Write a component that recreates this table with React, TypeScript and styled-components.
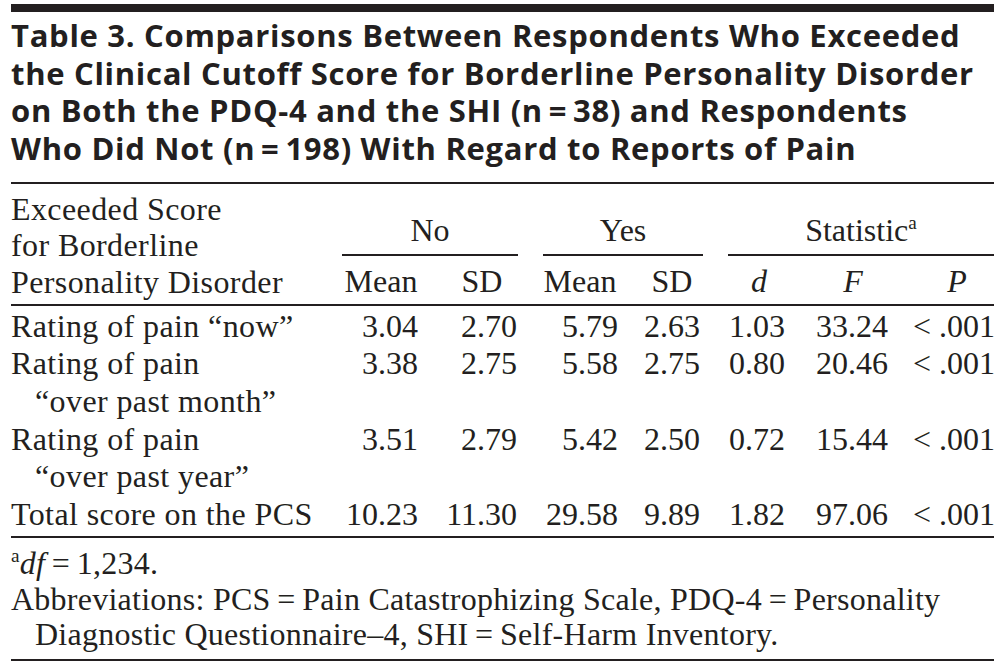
import React from "react";
import styled, { createGlobalStyle } from "styled-components";

const INK = "#231f20";
const COLS = "326px 81px 99px 101px 82px 85px 103px 106px";

const GlobalStyle = createGlobalStyle`
  html, body { margin: 0; padding: 0; background: #ffffff; }
  body { width: 1004px; height: 666px; overflow: hidden; }
`;

const Page = styled.div`
  box-sizing: border-box;
  width: 1004px;
  padding: 4px 10px 0 11px;
  color: ${INK};
`;

const Rule = styled.div<{ $h: number; $mt?: number }>`
  height: ${(p) => p.$h}px;
  margin-top: ${(p) => p.$mt ?? 0}px;
  background: ${INK};
`;

const Title = styled.h1`
  margin: 5px 0 0;
  font-family: "Open Sans", "Noto Sans", sans-serif;
  font-weight: 700;
  font-size: 31px;
  line-height: 37.7px;
  letter-spacing: 0.7px;
`;

const TitleLine = styled.span`
  display: block;
  white-space: nowrap;
`;

const Serif = styled.div`
  font-family: "Liberation Serif", "Times New Roman", serif;
  font-size: 32px;
`;

const HeadGrid = styled.div`
  display: grid;
  grid-template-columns: ${COLS};
  grid-template-rows: 77px 43px;
  border-bottom: 2px solid ${INK};
`;

const StubHead = styled.div`
  grid-column: 1;
  grid-row: 1 / span 2;
  align-self: end;
  padding-bottom: 3.5px;
  line-height: 36.5px;
  letter-spacing: 0.4px;
  white-space: nowrap;
`;

const Spanner = styled.div<{ $col: string; $ml: number; $mr: number }>`
  grid-row: 1;
  grid-column: ${(p) => p.$col};
  align-self: end;
  display: flex;
  flex-direction: column;
  margin: 0 ${(p) => p.$mr}px 5px ${(p) => p.$ml}px;
  text-align: center;
  line-height: 37.5px;
  white-space: nowrap;
`;

const SpannerRule = styled.div`
  height: 2px;
  margin-top: 4px;
  background: ${INK};
`;

const ColHead = styled.div<{ $pl: number; $italic?: boolean }>`
  grid-row: 2;
  align-self: end;
  padding: 0 0 3.5px ${(p) => p.$pl}px;
  text-align: center;
  line-height: 37.5px;
  font-style: ${(p) => (p.$italic ? "italic" : "normal")};
`;

const Body = styled.div`
  padding: 2px 0 2.4px;
  border-bottom: 2px solid ${INK};
`;

const Row = styled.div`
  display: grid;
  grid-template-columns: ${COLS};
  line-height: 37.6px;
`;

const Stub = styled.div`
  padding-left: 24px;
  text-indent: -24px;
  letter-spacing: 0.4px;
  white-space: nowrap;
`;

const Num = styled.div<{ $pl: number }>`
  padding-left: ${(p) => p.$pl}px;
  text-align: right;
  white-space: nowrap;
`;

const Sup = styled.span`
  font-size: 0.6em;
  vertical-align: 0.6em;
  line-height: 0;
`;

const Foot = styled.div`
  font-family: "Liberation Serif", "Times New Roman", serif;
  font-size: 32px;
  line-height: 35.5px;
  letter-spacing: 0.25px;
  padding-top: 8.5px;
`;

const FootLine = styled.div`
  padding-left: 24px;
  text-indent: -24px;
  white-space: nowrap;
`;

const I = styled.i`
  font-style: italic;
`;

const DATA_PADS = [25, 28, 26, 29, 30, 25];
const HEAD_PADS = [7, 29, 25, 26, 33, 33, 32];

type DataRow = { label: React.ReactNode; values: string[] };

const rows: DataRow[] = [
  { label: <>Rating of pain “now”</>, values: ["3.04", "2.70", "5.79", "2.63", "1.03", "33.24", "< .001"] },
  { label: <>Rating of pain<br />“over past month”</>, values: ["3.38", "2.75", "5.58", "2.75", "0.80", "20.46", "< .001"] },
  { label: <>Rating of pain<br />“over past year”</>, values: ["3.51", "2.79", "5.42", "2.50", "0.72", "15.44", "< .001"] },
  { label: <>Total score on the PCS</>, values: ["10.23", "11.30", "29.58", "9.89", "1.82", "97.06", "< .001"] },
];

const colHeads: { text: string; italic?: boolean }[] = [
  { text: "Mean" },
  { text: "SD" },
  { text: "Mean" },
  { text: "SD" },
  { text: "d", italic: true },
  { text: "F", italic: true },
  { text: "P", italic: true },
];

export default function App() {
  return (
    <>
      <GlobalStyle />
      <Page>
        <Rule $h={8} />
        <Title>
          <TitleLine>Table 3. Comparisons Between Respondents Who Exceeded</TitleLine>
          <TitleLine>the Clinical Cutoff Score for Borderline Personality Disorder</TitleLine>
          <TitleLine>on Both the PDQ-4 and the SHI (n{"\u2009=\u2009"}38) and Respondents</TitleLine>
          <TitleLine>Who Did Not (n{"\u2009=\u2009"}198) With Regard to Reports of Pain</TitleLine>
        </Title>
        <Rule $h={2} $mt={14} />
        <Serif>
          <HeadGrid>
            <StubHead>
              Exceeded Score
              <br />
              for Borderline
              <br />
              Personality Disorder
            </StubHead>
            <Spanner $col="2 / 4" $ml={5} $mr={-1}>
              No
              <SpannerRule />
            </Spanner>
            <Spanner $col="4 / 6" $ml={26} $mr={-3}>
              Yes
              <SpannerRule />
            </Spanner>
            <Spanner $col="6 / 9" $ml={28} $mr={0}>
              <span>
                Statistic<Sup>a</Sup>
              </span>
              <SpannerRule />
            </Spanner>
            {colHeads.map((h, i) => (
              <ColHead key={i} $pl={HEAD_PADS[i]} $italic={h.italic} style={{ gridColumn: i + 2 }}>
                {h.text}
              </ColHead>
            ))}
          </HeadGrid>
          <Body>
            {rows.map((r, ri) => (
              <Row key={ri}>
                <Stub>{r.label}</Stub>
                {r.values.map((v, i) => (
                  <Num key={i} $pl={i === 0 ? 0 : DATA_PADS[i - 1]}>
                    {v}
                  </Num>
                ))}
              </Row>
            ))}
          </Body>
        </Serif>
        <Foot>
          <FootLine>
            <Sup>a</Sup>
            <I>df</I>
            {"\u2009=\u2009"}1,234.
          </FootLine>
          <FootLine>
            Abbreviations: PCS{"\u2009=\u2009"}Pain Catastrophizing Scale, PDQ-4{"\u2009=\u2009"}Personality
            <br />
            Diagnostic Questionnaire–4, SHI{"\u2009=\u2009"}Self-Harm Inventory.
          </FootLine>
        </Foot>
        <Rule $h={2} $mt={6} />
      </Page>
    </>
  );
}
